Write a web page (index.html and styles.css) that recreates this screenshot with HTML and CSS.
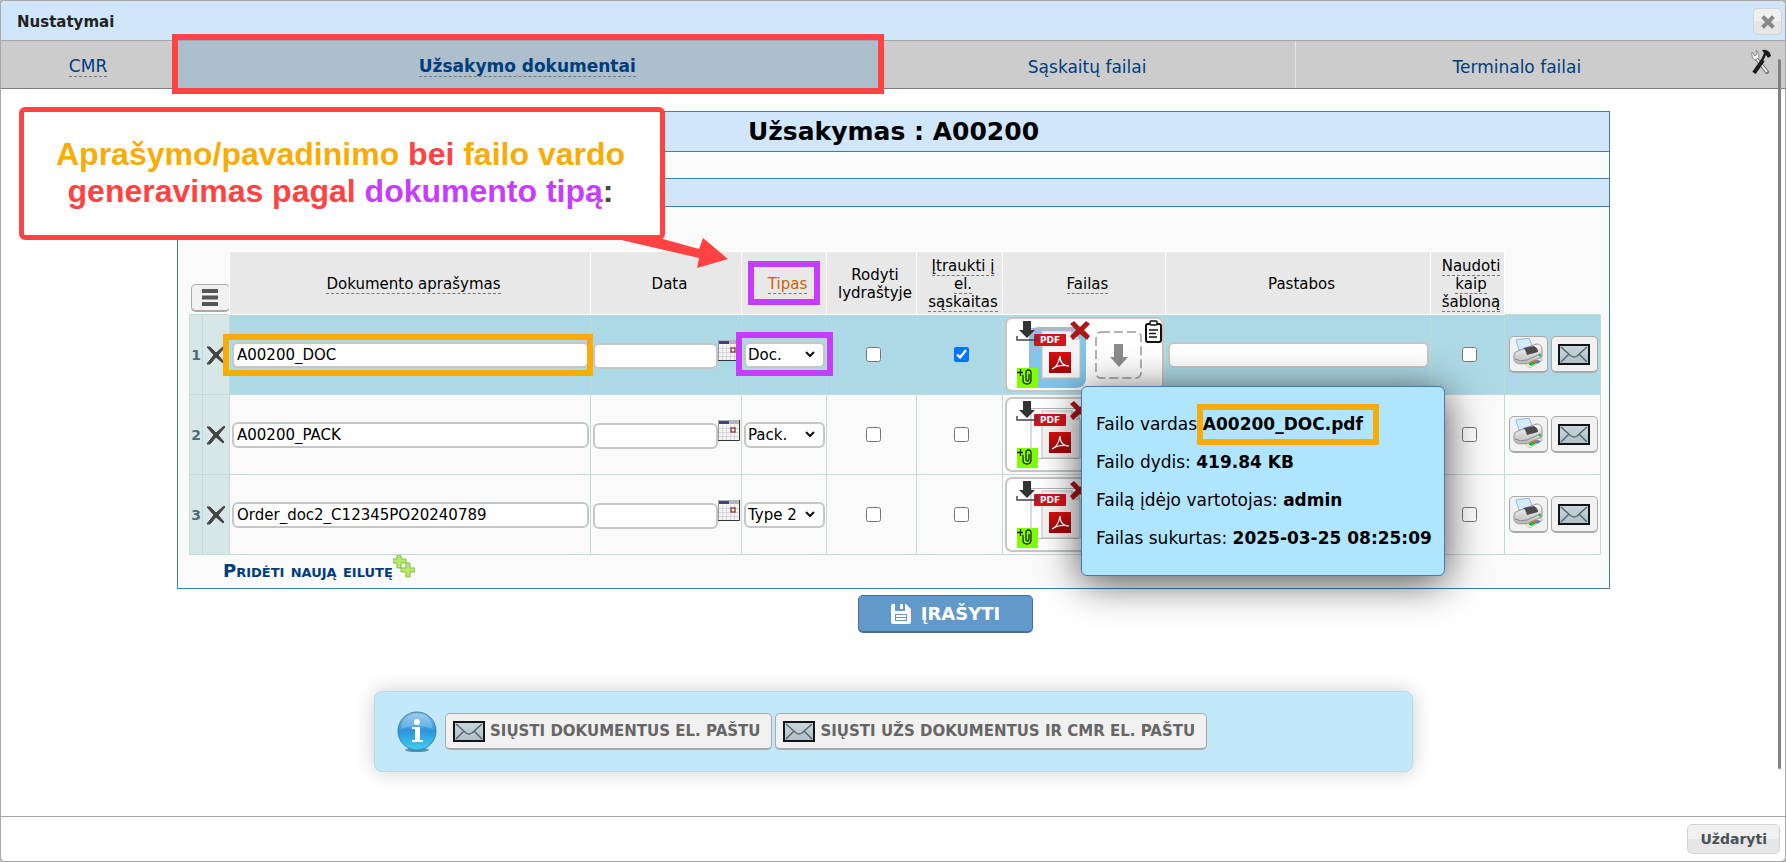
FILE: index.html
```html
<!DOCTYPE html>
<html lang="lt">
<head>
  <meta charset="UTF-8">
  <meta name="viewport" content="width=device-width, initial-scale=1.0">
  <title>Nustatymai</title>
  <link rel="stylesheet" href="styles.css">
</head>
<body>

<!-- Ikonos -->
<svg class="sprite" aria-hidden="true">
  <defs>
    <linearGradient id="gRed" x1="0" y1="0" x2="0" y2="1">
      <stop offset="0" stop-color="#d90f0f"/><stop offset="1" stop-color="#9d0606"/>
    </linearGradient>
    <linearGradient id="gMail" x1="0" y1="0" x2="0" y2="1">
      <stop offset="0" stop-color="#c9d6dc"/><stop offset="1" stop-color="#b0c0c8"/>
    </linearGradient>
    <linearGradient id="gInfo" x1="0" y1="0" x2="0" y2="1">
      <stop offset="0" stop-color="#8cc3ec"/><stop offset="0.5" stop-color="#2b95dc"/><stop offset="1" stop-color="#3fd0f5"/>
    </linearGradient>
    <linearGradient id="gPrn" x1="0" y1="0" x2="0" y2="1">
      <stop offset="0" stop-color="#fafafa"/><stop offset="1" stop-color="#b9b9b9"/>
    </linearGradient>
  </defs>
  <symbol id="i-mail" viewBox="0 0 32 21">
    <rect x="1" y="1" width="30" height="19" fill="url(#gMail)" stroke="#111517" stroke-width="2"/>
    <path d="M3 3l10 9q3 2 6 0l10-9M3 18l8-8M29 18l-8-8" fill="none" stroke="#59666c" stroke-width="1.500"/>
  </symbol>
  <symbol id="i-print" viewBox="0 0 30 32">
    <path d="M3 2l13-2 4 10-14 2z" fill="#d8ebfd" stroke="#86b8ec"/>
    <path d="M12 26l13-7 5 3-13 8z" fill="#e9f2e4" stroke="#b5c4b0"/>
    <path d="M15 26l5-3 6 1-8 4z" fill="#2fae2f"/><path d="M18 23l4-2 3 2-3 2z" fill="#ef5b28"/><path d="M24 22l4 1-4 3z" fill="#3a78e0"/>
    <path d="M1 17q0-3 4-4l18-7q6 0 6 6v7l-14 6q-12 3-14-3z" fill="url(#gPrn)" stroke="#979797"/>
    <path d="M10 10l11-2q4 2 4 6l-11 3q-1-5-4-7z" fill="#4a4a4a"/>
    <path d="M2 21q5 3 12 1l13-6" fill="none" stroke="#888"/>
    <circle cx="27" cy="17" r="1.500" fill="#25c03a"/>
  </symbol>
  <symbol id="i-calendar" viewBox="0 0 22 21">
    <rect x="0" y="0" width="22" height="21" fill="#f6f4ee"/>
    <rect x="0" y="0" width="22" height="4" fill="#b9b3b5"/>
    <rect x="1" y="1" width="10" height="3" fill="#3c4480"/>
    <path d="M1 8.500h19M1 12.500h19M1 16.500h19M4.500 5v15M8.500 5v15M12.500 5v15M16.500 5v15" stroke="#d2d3e0"/>
    <rect x="13" y="8" width="4" height="4" fill="#fff" stroke="#8c4a44" stroke-width="1.500"/>
    <path d="M.5 0v20.500" stroke="#9a98a5" fill="none"/><path d="M0 20.500h21.500V0" stroke="#34343c" fill="none"/>
  </symbol>
  <symbol id="i-remove" viewBox="0 0 20 20">
    <path d="M1 2l3 0 6 6 8-7 1 1-7 8 6 7-1 1-7-6-6 7-3 0 7-9z" fill="#444" stroke="#444"/>
  </symbol>
  <symbol id="i-add" viewBox="0 0 22 23">
    <path d="M4 0h4v4h5v4H8v5H4V8H0V4h4zM13 8h4v5h5v4h-5v5h-4v-5H8v-4h5z" fill="#b5ea6c" stroke="#86bd45"/>
  </symbol>
  <symbol id="i-files" viewBox="0 0 158 75">
    <path d="M26 11.500h48v50H26z" fill="none" stroke="#b5b5b5"/>
    <path d="M37 14h30l8 8v39H37z" fill="#f5f5f5" stroke="#c2c2c2"/>
    <path d="M67 14v8h8z" fill="#fff" stroke="#b5b5b5"/>
    <rect x="29" y="17" width="32" height="12" rx="1" fill="#d4121d"/>
    <rect x="44" y="35" width="22" height="21" fill="url(#gRed)"/>
    <path d="M47 52q6-2 8-13q0 10 9 10q-10-2-17 3" fill="none" stroke="#fff" stroke-width="1.300"/>
    <path d="M18 4h8v9h4l-8 8-8-8h4z" fill="#333"/>
    <path d="M12 19v4h20v-4" fill="none" stroke="#444" stroke-width="1.500"/>
    <rect x="12" y="51" width="21" height="20" fill="#80ff00"/>
    <path d="M12 55.500h6M15.500 52v7M18 58v5q0 4 4 4t4-4v-7q0-3-2.500-3T21 56v6q0 2 1.500 2t1.500-2v-5" fill="none" stroke="#222" stroke-width="1.300"/>
    <path d="M65 7l4-3 6 6 6-6 4 3-6 6 6 6-3 4-7-6-7 6-3-4 6-6z" fill="#ad1717"/>
  </symbol>
  <symbol id="i-drop" viewBox="0 0 158 75">
    <rect x="91" y="15" width="45" height="46" rx="5" fill="none" stroke="#999" stroke-width="1.500" stroke-dasharray="9 4"/>
    <path d="M109 27h9v13h5l-9 10-9-10h4z" fill="#8c8c8c"/>
    <rect x="141" y="7" width="15" height="18" rx="2" fill="none" stroke="#111" stroke-width="2"/>
    <rect x="145" y="4" width="7" height="4" rx="1" fill="#fff" stroke="#111" stroke-width="1.500"/>
    <path d="M144 13h9M144 16.500h7M144 20h8" stroke="#111" stroke-width="1.500"/>
  </symbol>
</svg>

<div class="dialog">
  <header class="titlebar">
    <span class="title">Nustatymai</span>
    <button type="button" class="btn-x" aria-label="Uždaryti langą">
      <svg viewBox="0 0 14 14" width="14" height="14"><path d="M3 3l8 8M11 3l-8 8" stroke="#888" stroke-width="4" stroke-linecap="square"/></svg>
    </button>
  </header>

  <nav class="tabs">
    <a href="#cmr" class="tab"><span class="hint">CMR</span></a>
    <a href="#uzsakymas" class="tab active mark"><span class="hint">Užsakymo dokumentai</span></a>
    <a href="#saskaitos" class="tab">Sąskaitų failai</a>
    <a href="#terminalas" class="tab last">Terminalo failai</a>
    <button type="button" class="btn-tools" aria-label="Įrankiai">
      <svg viewBox="0 0 20 25" width="20" height="25">
        <path d="M5 9l11 14" stroke="#777" stroke-width="4" stroke-linecap="round"/><path d="M5 9l11 14" stroke="#eee" stroke-width="2"/>
        <path d="M1 3q-1 6 3 8l4-2q1-5-3-8l1 4-2 2z" fill="#f4f4f4" stroke="#888"/>
        <path d="M12 11L3 24" stroke="#1c1c1c" stroke-width="4"/>
        <path d="M11 1q5-1 8 3l1 3-3 2-2-3-3 6-2-1 3-7z" fill="#1c1c1c"/>
      </svg>
    </button>
  </nav>

  <main class="content">
    <section class="panel">
      <h1>Užsakymas : A00200</h1>
      <div class="spacer"></div>
      <div class="band"></div>
      <div class="panel-body">
        <table class="docs">
          <colgroup>
            <col class="c-no"><col class="c-del"><col><col class="c-date"><col class="c-type"><col class="c-show"><col class="c-incl"><col class="c-file"><col class="c-note"><col class="c-tpl"><col class="c-act">
          </colgroup>
          <thead>
            <tr>
              <td colspan="2" class="menu-cell">
                <button type="button" class="btn btn-menu" aria-label="Meniu">
                  <svg viewBox="0 0 18 17" width="18" height="17"><path d="M1 2h16M1 8.500h16M1 15h16" stroke="#555" stroke-width="4"/></svg>
                </button>
              </td>
              <th><span class="hint">Dokumento aprašymas</span></th>
              <th>Data</th>
              <th class="sorted"><span class="hint">Tipas</span></th>
              <th>Rodyti lydraštyje</th>
              <th><span class="hint">Įtraukti į el. sąskaitas</span></th>
              <th><span class="hint">Failas</span></th>
              <th>Pastabos</th>
              <th><span class="hint">Naudoti kaip šabloną</span></th>
              <td></td>
            </tr>
          </thead>
          <tbody>
            <tr class="current">
              <td class="no">1</td>
              <td class="del"><button type="button" class="plain" aria-label="Šalinti"><svg width="20" height="20"><use href="#i-remove"/></svg></button></td>
              <td><div class="mark mark-desc"><input type="text" class="desc" aria-label="Dokumento aprašymas" value="A00200_DOC"></div></td>
              <td><div class="date"><input type="text" aria-label="Data"><svg width="22" height="21"><use href="#i-calendar"/></svg></div></td>
              <td><div class="mark mark-type"><select aria-label="Tipas"><option>Doc.</option><option>Pack.</option><option>Type 2</option></select></div></td>
              <td class="tick"><input type="checkbox" aria-label="Rodyti lydraštyje"></td>
              <td class="tick"><input type="checkbox" aria-label="Įtraukti į el. sąskaitas" checked></td>
              <td><div class="files"><span class="selected-file"></span><svg viewBox="0 0 158 75"><use href="#i-files"/><use href="#i-drop"/></svg><span class="badge">PDF</span>
                <div class="tooltip">
                  <p>Failo vardas:<b class="mark mark-name">A00200_DOC.pdf</b></p>
                  <p>Failo dydis: <b>419.84 KB</b></p>
                  <p>Failą įdėjo vartotojas: <b>admin</b></p>
                  <p>Failas sukurtas: <b>2025-03-25 08:25:09</b></p>
                </div>
              </div></td>
              <td><input type="text" class="desc" aria-label="Pastabos"></td>
              <td class="tick"><input type="checkbox" aria-label="Naudoti kaip šabloną"></td>
              <td><div class="actions">
                <button type="button" class="btn btn-print" aria-label="Spausdinti"><svg width="30" height="32"><use href="#i-print"/></svg></button>
                <button type="button" class="btn btn-mail" aria-label="Siųsti"><svg width="32" height="21"><use href="#i-mail"/></svg></button>
              </div></td>
            </tr>
            <tr>
              <td class="no">2</td>
              <td class="del"><button type="button" class="plain" aria-label="Šalinti"><svg width="20" height="20"><use href="#i-remove"/></svg></button></td>
              <td><input type="text" class="desc" aria-label="Dokumento aprašymas" value="A00200_PACK"></td>
              <td><div class="date"><input type="text" aria-label="Data"><svg width="22" height="21"><use href="#i-calendar"/></svg></div></td>
              <td><select aria-label="Tipas"><option>Doc.</option><option selected>Pack.</option><option>Type 2</option></select></td>
              <td class="tick"><input type="checkbox" aria-label="Rodyti lydraštyje"></td>
              <td class="tick"><input type="checkbox" aria-label="Įtraukti į el. sąskaitas"></td>
              <td><div class="files"><svg viewBox="0 0 158 75"><use href="#i-files"/></svg><span class="badge">PDF</span></div></td>
              <td><input type="text" class="desc" aria-label="Pastabos"></td>
              <td class="tick"><input type="checkbox" aria-label="Naudoti kaip šabloną"></td>
              <td><div class="actions">
                <button type="button" class="btn btn-print" aria-label="Spausdinti"><svg width="30" height="32"><use href="#i-print"/></svg></button>
                <button type="button" class="btn btn-mail" aria-label="Siųsti"><svg width="32" height="21"><use href="#i-mail"/></svg></button>
              </div></td>
            </tr>
            <tr>
              <td class="no">3</td>
              <td class="del"><button type="button" class="plain" aria-label="Šalinti"><svg width="20" height="20"><use href="#i-remove"/></svg></button></td>
              <td><input type="text" class="desc" aria-label="Dokumento aprašymas" value="Order_doc2_C12345PO20240789"></td>
              <td><div class="date"><input type="text" aria-label="Data"><svg width="22" height="21"><use href="#i-calendar"/></svg></div></td>
              <td><select aria-label="Tipas"><option>Doc.</option><option>Pack.</option><option selected>Type 2</option></select></td>
              <td class="tick"><input type="checkbox" aria-label="Rodyti lydraštyje"></td>
              <td class="tick"><input type="checkbox" aria-label="Įtraukti į el. sąskaitas"></td>
              <td><div class="files"><svg viewBox="0 0 158 75"><use href="#i-files"/></svg><span class="badge">PDF</span></div></td>
              <td><input type="text" class="desc" aria-label="Pastabos"></td>
              <td class="tick"><input type="checkbox" aria-label="Naudoti kaip šabloną"></td>
              <td><div class="actions">
                <button type="button" class="btn btn-print" aria-label="Spausdinti"><svg width="30" height="32"><use href="#i-print"/></svg></button>
                <button type="button" class="btn btn-mail" aria-label="Siųsti"><svg width="32" height="21"><use href="#i-mail"/></svg></button>
              </div></td>
            </tr>
          </tbody>
        </table>
        <a href="#nauja" class="add-row"><span>Pridėti naują eilutę</span><svg width="22" height="23"><use href="#i-add"/></svg></a>
      </div>
    </section>

    <button type="submit" class="btn-save">
      <svg viewBox="0 0 20 20" width="20" height="20"><path fill-rule="evenodd" d="M0 2q0-2 2-2h2v7h10V0h1l5 5v13q0 2-2 2H2q-2 0-2-2zM9 0h3v5H9zM4 10v7h12v-7zM5 11h10v2H5zM5 14h10v2H5z" fill="#fff"/></svg>
      ĮRAŠYTI
    </button>

    <div class="info-box">
      <svg class="info-icon" viewBox="0 0 40 41" width="40" height="41">
        <ellipse cx="20" cy="39" rx="12" ry="2" fill="#5b8fae"/>
        <circle cx="20" cy="20" r="19" fill="url(#gInfo)" stroke="#3c7fa8"/>
        <path d="M4 18Q6 3 20 3t16 15q-16-6-32 0z" fill="#fff" opacity=".2"/>
        <circle cx="20" cy="11" r="3" fill="#fff"/>
        <path d="M15 16h8v13h3v2H15v-2h3V18h-3z" fill="#fff"/>
      </svg>
      <button type="button" class="btn btn-send"><svg width="32" height="21"><use href="#i-mail"/></svg>SIŲSTI DOKUMENTUS EL. PAŠTU</button>
      <button type="button" class="btn btn-send"><svg width="32" height="21"><use href="#i-mail"/></svg>SIŲSTI UŽS DOKUMENTUS IR CMR EL. PAŠTU</button>
    </div>
  </main>

  <footer class="footer">
    <button type="button" class="btn-close">Uždaryti</button>
  </footer>

  <div class="scroll-thumb"></div>

  <!-- Paaiškinimas su rodykle -->
  <div class="callout">
    <p><span class="orange">Aprašymo/pavadinimo</span> bei <span class="orange">failo vardo</span><br>generavimas pagal <span class="purple">dokumento tipą</span><span class="dark">:</span></p>
    <svg class="arrow" viewBox="0 0 112 30" width="112" height="30"><path d="M0 0h46l36 10 4-11 25 21-31 9 2-10z" fill="#ff4343"/></svg>
  </div>
</div>

</body>
</html>
```
FILE: styles.css
```css
* {
  box-sizing: border-box;
}

body {
  margin: 0;
  background-color: #b5b5b5;
  font-family: Verdana, "DejaVu Sans", sans-serif;
  font-size: 15px;
  color: #000;
}

button,
input,
select {
  font-family: inherit;
  font-size: 15px;
  margin: 0;
}

.sprite {
  position: absolute;
  width: 0;
  height: 0;
}

.dialog {
  position: relative;
  display: flex;
  flex-direction: column;
  min-height: 100vh;
  background-color: #fff;
  border: 1px solid #a6a6a6;
  border-radius: 5px;
}

.titlebar {
  display: flex;
  align-items: center;
  justify-content: space-between;
  height: 40px;
  padding: 2px 3px 0 16px;
  background-color: #d0e6fa;
  border-bottom: 1px solid #a6a6a6;
  border-radius: 5px 5px 0 0;
}

.title {
  font-size: 15px;
  font-weight: bold;
  color: #222;
}

.btn-x {
  display: flex;
  align-items: center;
  justify-content: center;
  width: 29px;
  height: 27px;
  padding: 0;
  border: 1px solid #d3d3d3;
  border-radius: 5px;
  background: linear-gradient(#f0f0f0 50%, #e6e6e6 50%);
}

/* Kortelės */
.tabs {
  display: grid;
  grid-template-columns: 174fr 704fr 415fr 443fr 47px;
  height: 48px;
  background-color: #ccc;
  border-bottom: 1px solid #808080;
}

.tab {
  display: flex;
  align-items: center;
  justify-content: center;
  padding-top: 4px;
  font-size: 17px;
  color: #003d7d;
  text-decoration: none;
}

.tab.last {
  border-left: 1px solid #e6e6e6;
}

.tab.active {
  background-color: #adbecd;
  font-weight: bold;
}

.hint {
  border-bottom: 1px dashed #777;
}

.btn-tools {
  padding: 0 0 2px;
  border: none;
  background: none;
}

.mark {
  position: relative;
}

.mark::after {
  content: "";
  position: absolute;
  z-index: 2;
  border: 6px solid #f9ab07;
  pointer-events: none;
}

.tab.mark::after {
  inset: -7px -4px -6px -3px;
  border-color: #ff4343;
}

.content {
  flex: 1;
  display: flex;
  flex-direction: column;
  align-items: center;
  padding: 22px 175px 0 176px;
}

.panel {
  align-self: stretch;
  background-color: #fafafa;
  border: 1px solid #3e7cb1;
}

h1 {
  margin: 0;
  height: 40px;
  line-height: 40px;
  font-size: 25px;
  text-align: center;
  background-color: #d0e6fa;
  border-bottom: 1px solid #3e7cb1;
}

.spacer {
  height: 26px;
}

.band {
  height: 29px;
  background-color: #d0e6fa;
  border: solid #3e7cb1;
  border-width: 1px 0;
}

.panel-body {
  padding: 44px 8px 5px 11px;
}

/* Lentelė */
.docs {
  width: 100%;
  table-layout: fixed;
  border-collapse: collapse;
}

.c-no { width: 13px; }
.c-del { width: 27px; }
.c-date { width: 151px; }
.c-type { width: 85px; }
.c-show { width: 90px; }
.c-incl { width: 86px; }
.c-file { width: 163px; }
.c-note { width: 265px; }
.c-tpl { width: 74px; }
.c-act { width: 96px; }

.docs th {
  height: 63px;
  padding: 2px 0 0 7px;
  border: 1px solid #fff;
  background-color: #e8e8e8;
  font-weight: normal;
  line-height: 18px;
}

.docs th.sorted {
  position: relative;
  color: #c4650a;
}

.sorted::after {
  content: "";
  position: absolute;
  inset: 9px 6px 9px 6px;
  border: 6px solid #c63dff;
}

.menu-cell {
  padding: 0 0 2px 1px;
  vertical-align: bottom;
}

.docs tbody td {
  height: 80px;
  padding: 0 1px 0 2px;
  border: 1px solid #bfdcd5;
}

.docs tbody .no,
.docs tbody .del {
  padding: 0;
  background-color: #d7e6e6;
  text-align: center;
}

.docs .no {
  font-size: 14px;
  font-weight: bold;
  color: #4f6d74;
}

.current td {
  background-color: #add8e6;
}

.btn {
  display: flex;
  align-items: center;
  justify-content: center;
  padding: 0;
  border: 1px solid #a9a9a9;
  border-bottom-width: 2px;
  border-radius: 5px;
  background-color: #f1f1f1;
}

.btn-menu {
  width: 39px;
  height: 28px;
}

.plain {
  display: block;
  padding: 0 0 0 3px;
  border: none;
  background: none;
}

.plain svg {
  display: block;
}

.docs input[type="text"],
.docs select {
  display: block;
  width: 100%;
  height: 26px;
  padding: 1px 3px 0;
  border: 2px solid #c6c6c6;
  border-radius: 6px;
  background-color: #fff;
  color: #000;
}

.docs .desc {
  height: 27px;
}

.docs select {
  appearance: none;
  padding: 0 2px;
  background: #fff url("data:image/svg+xml,%3Csvg xmlns='http://www.w3.org/2000/svg' width='10' height='7'%3E%3Cpath d='M1 1l4 4 4-4' fill='none' stroke='%23111' stroke-width='2'/%3E%3C/svg%3E") no-repeat right 8px center;
}

.date {
  display: flex;
  align-items: flex-end;
  height: 29px;
}

.date svg {
  flex: none;
  align-self: flex-start;
}

.docs .tick {
  padding-left: 4px;
}

.tick input {
  display: block;
  width: 15px;
  height: 15px;
  margin: 0 auto;
}

.mark-desc::after {
  inset: -8px -4px -8px -9px;
}

.mark-type::after {
  inset: -10px -8px -8px;
  border-color: #c63dff;
}

.files {
  position: relative;
  height: 75px;
  border: 2px solid #c6c6c6;
  border-radius: 7px;
  background-color: #fff;
}

.files svg {
  position: absolute;
  top: -2px;
  left: -2px;
  width: 158px;
  height: 75px;
}

.selected-file {
  position: absolute;
  top: 8px;
  left: 22px;
  width: 57px;
  height: 61px;
  border-radius: 9px;
  background-color: #82c5ea;
}

.badge {
  position: absolute;
  top: 15px;
  left: 27px;
  width: 32px;
  color: #fff;
  font-size: 9px;
  font-weight: bold;
  line-height: 12px;
  text-align: center;
}

.actions {
  display: flex;
  justify-content: center;
  gap: 3px;
}

.btn-print {
  width: 39px;
  height: 37px;
}

.btn-mail {
  width: 47px;
  height: 37px;
}

.tooltip {
  position: absolute;
  z-index: 5;
  top: 67px;
  left: 74px;
  height: 190px;
  padding: 18px 12px 18px 14px;
  border: 1px solid #3e7cb1;
  border-radius: 6px;
  background-color: #b0e5ff;
  box-shadow: 0 6px 40px rgba(0, 0, 0, 0.7);
  font-size: 17px;
  line-height: 38px;
  white-space: nowrap;
}

.tooltip p {
  margin: 0;
}

.mark-name::after {
  inset: -10px -16px -11px -6px;
}

.add-row {
  display: inline-flex;
  align-items: flex-end;
  height: 28px;
  margin-left: 34px;
  color: #003d7d;
  font-size: 18px;
  font-weight: bold;
  font-variant: small-caps;
  text-decoration: none;
}

.add-row span {
  line-height: 24px;
}

.add-row svg {
  align-self: flex-start;
}

/* Mygtukai apačioje */
.btn-save {
  display: flex;
  align-items: center;
  justify-content: center;
  gap: 10px;
  width: 175px;
  height: 38px;
  margin: 6px 0 0 104px;
  border: 1px solid #44719c;
  border-bottom-width: 2px;
  border-radius: 5px;
  background-color: #6199ca;
  color: #fff;
  font-size: 18px;
  font-weight: bold;
}

.info-box {
  display: flex;
  align-items: center;
  align-self: stretch;
  gap: 3px;
  height: 81px;
  margin: 58px 197px 0;
  padding: 0 22px;
  border: 1px solid #b3dbee;
  border-radius: 8px;
  background-color: #c3e8fa;
  box-shadow: 0 0 20px rgba(0, 0, 0, 0.2);
}

.info-icon {
  margin-right: 5px;
}

.btn-send {
  gap: 5px;
  height: 37px;
  padding: 0 11px 0 7px;
  color: #666;
  font-weight: bold;
  white-space: nowrap;
}

.footer {
  display: flex;
  align-items: center;
  justify-content: flex-end;
  height: 45px;
  padding: 0 5px;
  border-top: 1px solid #a6a6a6;
}

.btn-close {
  height: 30px;
  padding: 0 12px;
  border: 1px solid #d3d3d3;
  border-radius: 5px;
  background: linear-gradient(#f0f0f0 50%, #e6e6e6 50%);
  color: #4a5157;
  font-size: 14px;
  font-weight: bold;
}

.scroll-thumb {
  position: absolute;
  top: 58px;
  right: 4px;
  bottom: 92px;
  width: 3px;
  border-radius: 2px;
  background-color: #808080;
}

.callout {
  position: absolute;
  z-index: 4;
  top: 106px;
  left: 18px;
  width: 646px;
  height: 133px;
  padding-right: 3px;
  border: 5px solid #ff4343;
  border-radius: 6px;
  background-color: #fff;
  color: #ff4343;
  font-family: Arial, "Liberation Sans", sans-serif;
  font-size: 32px;
  font-weight: bold;
  line-height: 37px;
  text-align: center;
}

.callout p {
  margin: 24px 0 0;
}

.orange { color: #f9ab07; }
.purple { color: #c63dff; }
.dark { color: #444; }

.arrow {
  position: absolute;
  top: 127px;
  left: 593px;
  overflow: visible;
}
```
